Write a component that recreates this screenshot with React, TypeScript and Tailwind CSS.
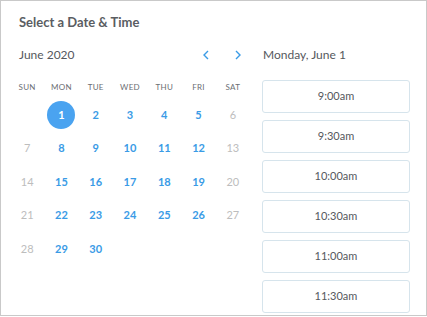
import React from 'react';

const days = ['SUN', 'MON', 'TUE', 'WED', 'THU', 'FRI', 'SAT'];
const weeks: (number | null)[][] = [
  [null, 1, 2, 3, 4, 5, 6],
  [7, 8, 9, 10, 11, 12, 13],
  [14, 15, 16, 17, 18, 19, 20],
  [21, 22, 23, 24, 25, 26, 27],
  [28, 29, 30, null, null, null, null],
];
const times = ['9:00am', '9:30am', '10:00am', '10:30am', '11:00am', '11:30am'];

export default function App() {
  return (
    <div
      className="w-[427px] h-[316px] border border-[#c9c9c9] bg-white overflow-hidden flex flex-col text-[#55585d]"
      style={{ fontFamily: 'Lato, "Open Sans", sans-serif' }}
    >
      <h1 className="pl-[18px] pt-[12px] h-[36px] text-[13px] font-bold leading-[18px] text-[#5a5d62]">Select a Date &amp; Time</h1>

      <div className="flex">
        {/* Calendar */}
        <div className="w-[252px] pl-[9px]">
          <div className="flex items-center h-[36px] pl-[9px] pr-[5px]">
            <span className="text-[12px] leading-[16px] flex-1">June 2020</span>
            <button className="w-[20px] h-[20px] flex items-center justify-center text-[#3a9be6]">
              <svg width="6" height="10" viewBox="0 0 6 10" fill="none">
                <path d="M5 1L1 5l4 4" stroke="currentColor" strokeWidth="1.4" />
              </svg>
            </button>
            <button className="ml-[12px] w-[20px] h-[20px] flex items-center justify-center text-[#3a9be6]">
              <svg width="6" height="10" viewBox="0 0 6 10" fill="none">
                <path d="M1 1l4 4-4 4" stroke="currentColor" strokeWidth="1.4" />
              </svg>
            </button>
          </div>

          <div className="grid grid-cols-7 w-[240px] mt-[6px]">
            {days.map(d => (
              <div key={d} className="h-[16px] flex items-center justify-center text-[8px] tracking-[0.3px] text-[#6b6e73]">
                {d}
              </div>
            ))}
          </div>

          <div className="grid grid-cols-7 w-[240px] mt-[3px]">
            {weeks.flat().map((n, i) => {
              const weekend = i % 7 === 0 || i % 7 === 6;
              return (
                <div key={i} className="h-[33.5px] flex items-center justify-center">
                  {n === null ? null : n === 1 ? (
                    <span className="w-[28px] h-[28px] rounded-full bg-[#4aa3f0] text-white text-[11px] font-bold flex items-center justify-center">
                      1
                    </span>
                  ) : weekend ? (
                    <span className="text-[11px] text-[#bdbdbd]">{n}</span>
                  ) : (
                    <span className="text-[11px] font-bold text-[#3a9be6]">{n}</span>
                  )}
                </div>
              );
            })}
          </div>
        </div>

        {/* Times */}
        <div className="ml-[9px] w-[148px]">
          <div className="h-[36px] flex items-center text-[12px] pl-[1px]">Monday, June 1</div>
          <div className="mt-[7px] flex flex-col gap-[7px]">
            {times.map(t => (
              <button
                key={t}
                className="h-[33px] w-full border border-[#d6e4ec] rounded-[3px] text-[11px] text-[#55585d] flex items-center justify-center"
              >
                {t}
              </button>
            ))}
          </div>
        </div>
      </div>
    </div>
  );
}
